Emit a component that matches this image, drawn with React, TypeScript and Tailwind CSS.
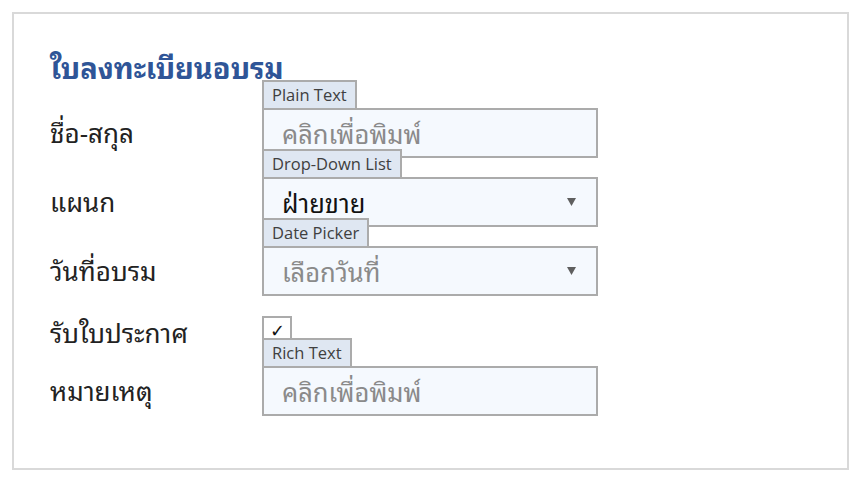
import { ReactNode } from 'react'

const FONT = {
  fontFamily:
    '"Leelawadee UI", Tahoma, "Noto Sans Thai Looped", "Noto Looped Thai", Garuda, Loma, Waree, "Noto Sans", sans-serif',
}
const LATIN = { fontFamily: '"Open Sans", "Noto Sans", sans-serif' }

function Tag({ children }: { children: ReactNode }) {
  return (
    <div className="relative z-10 flex">
      <span
        className="h-[28px] border-2 border-b-0 border-[#ababab] bg-[#dfe7f2] px-2 text-[16.5px] leading-[26px] text-[#404040]"
        style={LATIN}
      >
        {children}
      </span>
    </div>
  )
}

function Box({
  children,
  placeholder,
  arrow,
}: {
  children: ReactNode
  placeholder?: boolean
  arrow?: boolean
}) {
  return (
    <div className="flex h-[50px] w-[336px] items-center justify-between border-2 border-[#ababab] bg-[#f5f9fe] pl-[18px] pr-[20px]">
      <span
        className={`text-[25.5px] leading-none ${placeholder ? 'text-[#8a8a8a]' : 'text-[#111]'}`}
      >
        {children}
      </span>
      {arrow && (
        <svg width="9" height="8" viewBox="0 0 9 8">
          <path d="M0 0 H9 L4.5 8 Z" fill="#5f5f5f" />
        </svg>
      )}
    </div>
  )
}

function Row({
  label,
  tag,
  children,
  className = '',
}: {
  label: string
  tag: string
  children: ReactNode
  className?: string
}) {
  return (
    <div className={`flex ${className}`}>
      <div className="flex w-[212px] flex-col">
        <div className="h-[28px]" />
        <div className="flex h-[50px] items-center pb-[3px] text-[26px] text-[#222]">{label}</div>
      </div>
      <div className="flex flex-col">
        <Tag>{tag}</Tag>
        {children}
      </div>
    </div>
  )
}

export default function App() {
  return (
    <div className="h-[481px] w-[859px] bg-white pl-[12px] pt-[12px]" style={FONT}>
      <div className="h-[458px] w-[837px] border-2 border-[#d9d9d9] pl-[36px] pt-[38px]">
        <h1 className="h-[28px] text-[29px] font-bold leading-[28px] text-[#2f5597]">
          ใบลงทะเบียนอบรม
        </h1>
        <div className="flex flex-col">
          <Row label="ชื่อ-สกุล" tag="Plain Text">
            <Box placeholder>คลิกเพื่อพิมพ์</Box>
          </Row>
          <Row label="แผนก" tag="Drop-Down List" className="-mt-[9px]">
            <Box arrow>ฝ่ายขาย</Box>
          </Row>
          <Row label="วันที่อบรม" tag="Date Picker" className="-mt-[9px]">
            <Box placeholder arrow>
              เลือกวันที่
            </Box>
          </Row>
          <div className="mt-[20px] flex h-[22px]">
            <div className="flex h-[30px] w-[212px] items-center text-[26px] text-[#222]">
              รับใบประกาศ
            </div>
            <div className="relative h-[24px] w-[30px] border-2 border-b-0 border-[#ababab]">
              <span className="absolute left-[6px] top-[2px] text-[18px] leading-none text-[#111]">✓</span>
            </div>
          </div>
          <Row label="หมายเหตุ" tag="Rich Text">
            <Box placeholder>คลิกเพื่อพิมพ์</Box>
          </Row>
        </div>
      </div>
    </div>
  )
}
